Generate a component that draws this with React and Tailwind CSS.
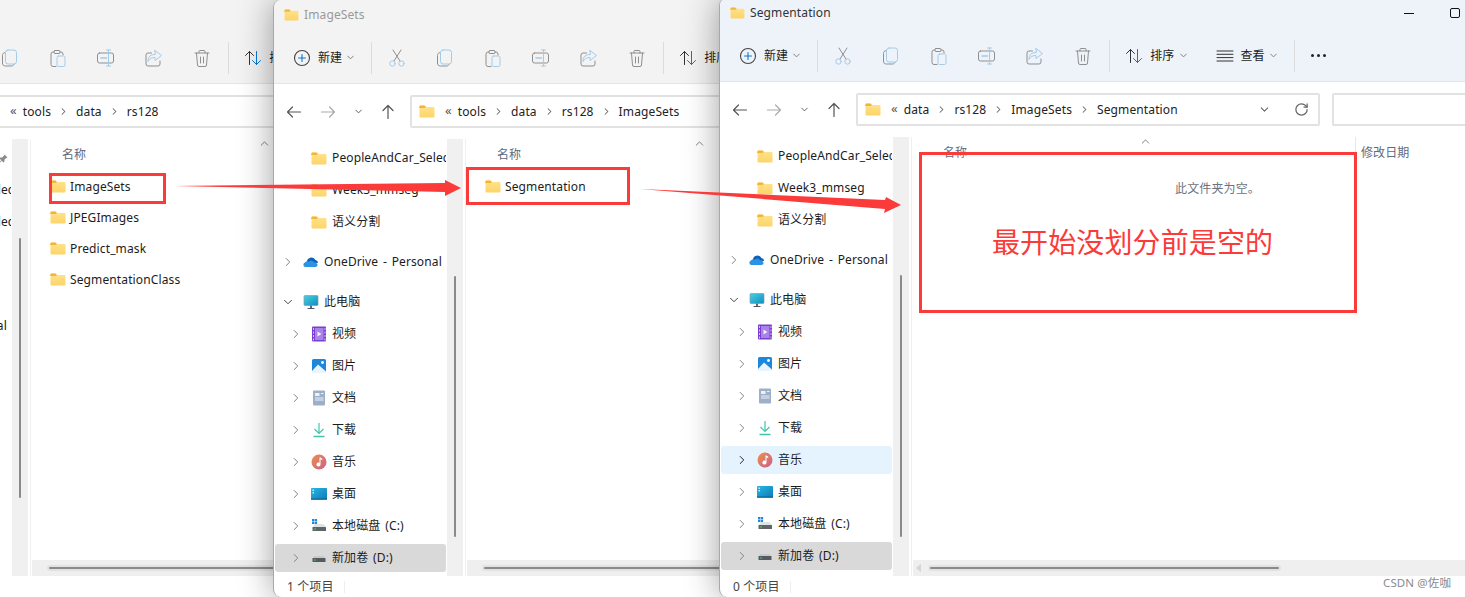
import { ChevronRight, ChevronDown, ChevronUp, RotateCw } from 'lucide-react';

const GRAY = '#8f8f8f';
const BLUE = '#a3cbea';

function Folder({ className = 'w-4 h-[13px]' }) {
  return (
    <svg viewBox="0 0 16 13" className={`${className} shrink-0`}>
      <defs>
        <linearGradient id="fold" x1="0" y1="0" x2="0" y2="1">
          <stop offset="0" stopColor="#ffe38f" />
          <stop offset="1" stopColor="#fdd467" />
        </linearGradient>
      </defs>
      <path d="M0.500 1.500a1 1 0 0 1 1-1h4l1.500 1.500h7.500a1 1 0 0 1 1 1v8.500a1 1 0 0 1-1 1h-13a1 1 0 0 1-1-1z" fill="url(#fold)" />
      <path d="M0.500 1.500a1 1 0 0 1 1-1h4l1.500 1.500-1.500 1h-5.500z" fill="#f3b536" />
    </svg>
  );
}

function Tool({ children }) {
  return <svg viewBox="0 0 20 20" fill="none" strokeWidth="1" strokeLinecap="round" strokeLinejoin="round" className="w-5 h-5 shrink-0">{children}</svg>;
}

const NewIcon = () => (
  <Tool>
    <circle cx="10" cy="10" r="7.500" stroke="#444" strokeWidth="1.100" />
    <path d="M10 6.500v7M6.500 10h7" stroke="#0a78d4" strokeWidth="1.100" />
  </Tool>
);
const CutIcon = () => (
  <Tool>
    <path d="M6 2l7 11M14 2L7 13" stroke={GRAY} />
    <circle cx="5.500" cy="15.500" r="2.700" stroke={BLUE} />
    <circle cx="14.500" cy="15.500" r="2.700" stroke={BLUE} />
  </Tool>
);
const CopyIcon = () => (
  <Tool>
    <path d="M5 4.500c-1.500.3-2.500 1.200-2.500 3v7.500c0 2 1 3 3 3h6c1.200 0 2-.5 2.500-1.500" stroke={GRAY} />
    <rect x="5.500" y="2" width="11" height="14" rx="2.500" stroke={BLUE} />
  </Tool>
);
const PasteIcon = () => (
  <Tool>
    <path d="M8 18.500H5a2 2 0 0 1-2-2V6a2 2 0 0 1 2-2h1M12 4h1a2 2 0 0 1 2 2v1" stroke={GRAY} />
    <rect x="6" y="2.500" width="6" height="3" rx="1" stroke={GRAY} />
    <rect x="9" y="8" width="8" height="10.500" rx="1.500" stroke={BLUE} />
  </Tool>
);
const RenameIcon = () => (
  <Tool>
    <rect x="1.500" y="5" width="16" height="10" rx="2" stroke={GRAY} />
    <path d="M5 10h5.500" stroke={BLUE} strokeWidth="1.600" />
    <path d="M12.500 2v16M10.500 2h4M10.500 18h4" stroke={BLUE} />
  </Tool>
);
const ShareIcon = () => (
  <Tool>
    <path d="M7.500 5H4a2 2 0 0 0-2 2v9a2 2 0 0 0 2 2h10a2 2 0 0 0 2-2v-3" stroke={GRAY} />
    <path d="M11 2.500l6.500 5-6.500 5v-3c-3.500 0-5.500 1-7 4 0-5 2.500-7 7-7z" stroke={BLUE} />
  </Tool>
);
const DeleteIcon = () => (
  <Tool>
    <path d="M3 5h14M7 5V3.500a1 1 0 0 1 1-1h4a1 1 0 0 1 1 1V5M4.500 5l1 12a1.500 1.500 0 0 0 1.500 1.500h6a1.500 1.500 0 0 0 1.500-1.500l1-12M8.500 9v6M11.500 9v6" stroke={GRAY} />
  </Tool>
);
const SortIcon = () => (
  <Tool>
    <path d="M6.500 16.500V3.500M2.500 7.500l4-4 4 4" stroke="#333" />
    <path d="M13.500 3.500v13M9.500 12.500l4 4 4-4" stroke="#0a78d4" />
  </Tool>
);
const ViewIcon = () => (
  <Tool>
    <path d="M2 5h16M2 8.300h16M2 11.600h16M2 15h16" stroke="#333" />
  </Tool>
);
const Arrow = ({ d, color }) => (
  <Tool>
    <path d={d} stroke={color} strokeWidth="1.200" />
  </Tool>
);

const OneDriveIcon = () => (
  <svg viewBox="0 0 16 12" className="w-4 h-3 shrink-0">
    <path d="M4 6.500a4.500 4.500 0 0 1 8.500-2.500 3 3 0 0 1 2.500 3z" fill="#0b63bd" />
    <path d="M2.500 11a2.300 2.300 0 0 1-.5-4.500 3 3 0 0 1 4-.8 3 3 0 0 1 3.500-.8 3 3 0 0 1 2 2 2.200 2.200 0 0 1 3 2.200c0 1-.8 1.900-1.800 1.900z" fill="#2a93e4" />
  </svg>
);
const PcIcon = () => (
  <svg viewBox="0 0 16 16" className="w-4 h-4 shrink-0">
    <defs>
      <linearGradient id="pc" x1="0" y1="0" x2="1" y2="1">
        <stop offset="0" stopColor="#4ad0e0" />
        <stop offset="1" stopColor="#0f8fc0" />
      </linearGradient>
    </defs>
    <rect x="1" y="1.500" width="14" height="10" rx="1" fill="url(#pc)" stroke="#8a9aa5" strokeWidth="0.700" />
    <rect x="7" y="11.500" width="2" height="2.500" fill="#667" />
    <rect x="4.500" y="14" width="7" height="1" fill="#556" />
  </svg>
);
const VideoIcon = () => (
  <svg viewBox="0 0 16 16" className="w-4 h-4 shrink-0">
    <rect x="1" y="0.500" width="14" height="15" rx="1" fill="#7a3fd0" />
    <rect x="4" y="2" width="8.500" height="12" fill="#a884e8" />
    <path d="M6.500 5.500l4 2.500-4 2.500z" fill="#f3ecff" />
    <path d="M2 2h1v2H2zM2 5.500h1v2H2zM2 9h1v2H2zM2 12.500h1v2H2zM13.500 2h1v2h-1zM13.500 5.500h1v2h-1zM13.500 9h1v2h-1zM13.500 12.500h1v2h-1z" fill="#d6c3f5" />
  </svg>
);
const PictureIcon = () => (
  <svg viewBox="0 0 16 16" className="w-4 h-4 shrink-0">
    <rect x="1" y="1" width="14" height="14" rx="1.500" fill="#1d87dc" />
    <circle cx="11.500" cy="4.500" r="1.400" fill="#fff" />
    <path d="M1 13l6-6.500 8 7V15H1z" fill="#eaf4fc" />
  </svg>
);
const DocIcon = () => (
  <svg viewBox="0 0 16 16" className="w-4 h-4 shrink-0">
    <rect x="2" y="0.500" width="12" height="15" rx="1" fill="#9db0c8" />
    <path d="M4 3h4.500v3H4zM4 7.500h8.500v1H4zM4 9.500h8.500v1H4zM10 3h2.500v1H10z" fill="#eef2f7" />
  </svg>
);
const DownloadIcon = () => (
  <svg viewBox="0 0 16 16" fill="none" className="w-4 h-4 shrink-0">
    <path d="M8 1v10M3.500 7L8 11.500 12.500 7" stroke="#3fc6a8" strokeWidth="1.200" />
    <path d="M2.500 14.500h11" stroke="#3fc6a8" strokeWidth="1.400" />
  </svg>
);
const MusicIcon = () => (
  <svg viewBox="0 0 16 16" className="w-4 h-4 shrink-0">
    <defs>
      <linearGradient id="mus" x1="0" y1="0" x2="1" y2="1">
        <stop offset="0" stopColor="#ee8f4a" />
        <stop offset="1" stopColor="#c9608f" />
      </linearGradient>
    </defs>
    <circle cx="8" cy="8" r="7.500" fill="url(#mus)" />
    <path d="M8.500 3.500h1l2 1.500-.5 1-1.500-.8V10.500a2 2 0 1 1-1-1.700z" fill="#fff" />
  </svg>
);
const DesktopIcon = () => (
  <svg viewBox="0 0 16 16" className="w-4 h-4 shrink-0">
    <defs>
      <linearGradient id="dsk" x1="0" y1="0" x2="1" y2="1">
        <stop offset="0" stopColor="#2cb6e2" />
        <stop offset="1" stopColor="#0b7cb8" />
      </linearGradient>
    </defs>
    <rect x="0" y="2" width="16" height="11.500" rx="0.800" fill="url(#dsk)" />
    <rect x="0" y="12.500" width="16" height="1.200" fill="#0a5f92" />
    <path d="M1.500 3.500h1.500v1.500H1.500zM1.500 6h1.500v1.500H1.500z" fill="#bfe8f7" />
  </svg>
);
const DriveCIcon = () => (
  <svg viewBox="0 0 16 16" className="w-4 h-4 shrink-0">
    <path d="M2 9l1.500-3h9L15 9z" fill="#dfe3e6" />
    <rect x="1.500" y="9" width="13.500" height="4" rx="0.600" fill="#5f6468" />
    <rect x="3" y="10.500" width="2" height="1" fill="#2fd17a" />
    <path d="M1 1h2.300v2.300H1zM3.800 1h2.300v2.300H3.800zM1 3.800h2.300v2.300H1zM3.800 3.800h2.300v2.300H3.800z" fill="#1f88d8" />
  </svg>
);
const DriveDIcon = () => (
  <svg viewBox="0 0 16 16" className="w-4 h-4 shrink-0">
    <path d="M2 8l1.500-2h9L14 8z" fill="#c6cacd" />
    <rect x="1.500" y="8" width="13" height="4" rx="0.600" fill="#565a5e" />
    <rect x="3" y="9.500" width="2" height="1" fill="#36c97c" />
  </svg>
);
const PinIcon = () => (
  <svg viewBox="0 0 10 10" className="w-[9px] h-[9px] shrink-0 ml-auto mr-[3px]">
    <path d="M6 0.500l3.500 3.500-1.500.5-2 2 0 2-1 1L3 7.500 1 9.500.5 9 2.500 7 .5 5l1-1h2l2-2z" fill="#8a8a8a" />
  </svg>
);

const baseNav = [
  { label: 'PeopleAndCar_Selec', icon: Folder, level: 1, none: true },
  { label: 'Week3_mmseg', icon: Folder, level: 1, none: true },
  { label: '语义分割', icon: Folder, level: 1, none: true },
  { label: 'OneDrive - Personal', icon: OneDriveIcon, level: 0, gap: true },
  { label: '此电脑', icon: PcIcon, level: 0, gap: true, open: true },
  { label: '视频', icon: VideoIcon, level: 1 },
  { label: '图片', icon: PictureIcon, level: 1 },
  { label: '文档', icon: DocIcon, level: 1 },
  { label: '下载', icon: DownloadIcon, level: 1 },
  { label: '音乐', icon: MusicIcon, level: 1 },
  { label: '桌面', icon: DesktopIcon, level: 1 },
  { label: '本地磁盘 (C:)', icon: DriveCIcon, level: 1 },
  { label: '新加卷 (D:)', icon: DriveDIcon, level: 1, selected: true },
];

const quickNav = [
  { label: '图片', icon: PictureIcon, level: 1, none: true, pin: true },
  { label: 'PeopleAndCar_Selec', icon: Folder, level: 1, none: true },
  { label: 'PeopleAndCar_Selec', icon: Folder, level: 1, none: true },
  { label: 'Week3', icon: Folder, level: 1, none: true },
  { label: '语义分割', icon: Folder, level: 1, none: true },
  { label: 'OneDrive - Personal', icon: OneDriveIcon, level: 0, gap: true },
  { label: '此电脑', icon: PcIcon, level: 0, gap: true, open: true },
  { label: '视频', icon: VideoIcon, level: 1 },
  { label: '图片', icon: PictureIcon, level: 1 },
  { label: '文档', icon: DocIcon, level: 1 },
  { label: '下载', icon: DownloadIcon, level: 1 },
];

function NavRow({ item, hovered }) {
  const Icon = item.icon;
  const bg = item.selected ? 'bg-[#d9d9d9]' : hovered ? 'bg-[#e5f3ff]' : '';
  const Chev = item.open ? ChevronDown : ChevronRight;
  return (
    <div className={`flex items-center h-7 ml-px mr-px rounded-[3px] shrink-0 whitespace-nowrap overflow-hidden [word-spacing:1.500px] ${item.level ? 'pl-[13px]' : 'pl-[5px]'} ${item.gap ? 'mt-2' : ''} ${bg}`}>
      <span className="w-4 flex justify-center shrink-0">
        {!item.none && (
          <Chev size={14} strokeWidth={1.700} color={hovered ? '#222' : item.open ? '#444' : '#808080'} />
        )}
      </span>
      <span className="ml-[7px] flex justify-center shrink-0"><Icon /></span>
      <span className="ml-[5px] text-[#1c1c1c]">{item.label}</span>
      {item.pin && <PinIcon />}
    </div>
  );
}

function Window({ left, top, height, width, bar, title, titleColor, crumbs, nav, navHover, thumbTop, thumbH, files, empty, status, scrollW, arrow, controls, wide, shadow }) {
  return (
    <section
      className={`absolute overflow-hidden rounded-l-lg bg-white flex flex-col border-l border-[#a8a8a8] ${shadow ? 'shadow-[0_0_34px_rgba(0,0,0,0.38)]' : ''}`}
      style={{ left, top, height, width }}
    >
      <div className={bar}>
        <div className="h-[30px] flex items-center pl-[10px]">
          <Folder className="w-[15px] h-[12px]" />
          <span className={`ml-[5px] ${titleColor}`}>{title}</span>
          {controls && (
            <div className="ml-auto flex">
              <span className="w-[46px] flex justify-center items-center"><span className="w-[10px] h-px bg-[#111]" /></span>
              <span className="w-[46px] flex justify-center items-center"><span className="w-[10px] h-[10px] border border-[#111] rounded-[2px]" /></span>
              <span className="w-[46px]" />
            </div>
          )}
        </div>
        <div className="h-[54px] w-max min-w-full whitespace-nowrap border-b border-[#e4e4e4] flex items-center pl-[18px] pt-[2px] text-[#1c1c1c]">
          <NewIcon />
          <span className="ml-[6px]">新建</span>
          <ChevronDown size={11} color="#777" className="ml-[3px]" />
          <span className="ml-[15px] w-px h-8 bg-[#dcdcdc]" />
          <div className="flex ml-[1px]">
            {[CutIcon, CopyIcon, PasteIcon, RenameIcon, ShareIcon, DeleteIcon].map((I, i) => (
              <span key={i} className="w-12 flex justify-center"><I /></span>
            ))}
          </div>
          <span className="ml-[2px] w-px h-8 bg-[#dcdcdc]" />
          <span className="ml-[14px]"><SortIcon /></span>
          <span className="ml-[6px]">排序</span>
          <ChevronDown size={11} color="#777" className="ml-[3px]" />
          <span className="ml-[26px]"><ViewIcon /></span>
          <span className="ml-[6px]">查看</span>
          <ChevronDown size={11} color="#777" className="ml-[3px]" />
          <span className="ml-[15px] w-px h-8 bg-[#dcdcdc]" />
          <span className="ml-[16px] flex gap-[3px]">
            <i className="w-[3px] h-[3px] rounded-full bg-[#222]" />
            <i className="w-[3px] h-[3px] rounded-full bg-[#222]" />
            <i className="w-[3px] h-[3px] rounded-full bg-[#222]" />
          </span>
        </div>
      </div>

      <div className="h-[55px] flex items-start pt-[11px] pl-[10px] shrink-0">
        <div className="h-[33px] flex items-center">
          <Arrow d="M16.500 10h-13M8.500 5l-5 5 5 5" color="#555" />
          <span className="ml-[14px]"><Arrow d="M3.500 10h13M11.500 5l5 5-5 5" color="#aaa" /></span>
          <ChevronDown size={11} color="#555" strokeWidth={2} className="ml-[15px]" />
          <span className="ml-[14px]"><Arrow d="M10 16.500v-13M5 8.500l5-5 5 5" color="#555" /></span>
        </div>
        <div className="ml-[12px] w-[464px] h-[33px] shrink-0 border-2 border-[#e2e2e2] rounded-[2px] flex items-center pl-[7px] pr-[9px] text-[#222] whitespace-nowrap">
          <Folder />
          <span className="ml-[10px] text-[13px] leading-none text-[#555] -mt-[3px]">«</span>
          <span className="ml-[6px] flex items-center">
            {crumbs.map((c, i) => (
              <span key={c} className="flex items-center">
                {i > 0 && <ChevronRight size={11} strokeWidth={2.200} color="#666" className="mx-[7px]" />}
                {c}
              </span>
            ))}
          </span>
          <ChevronDown size={13} color="#666" className="ml-auto" />
          <RotateCw size={15} color="#666" className="ml-[23px]" />
        </div>
        <div className="ml-[12px] w-[300px] h-[33px] shrink-0 border-2 border-[#e2e2e2] rounded-[2px]" />
      </div>

      <div className="flex-1 flex min-h-0">
        <div className="w-[173px] shrink-0 flex flex-col gap-1 pt-[5px] overflow-hidden">
          {nav.map((item, i) => (
            <NavRow key={i} item={item} hovered={navHover === item.label} />
          ))}
        </div>
        <div className="w-4 shrink-0 bg-[#f0f0f0] relative">
          <span className="absolute left-[7px] w-[2px] bg-[#8a8a8a] rounded-sm" style={{ top: thumbTop, height: thumbH }} />
        </div>
        <div className="ml-[2px] w-px shrink-0 bg-[#f0f0f0]" />
        <div className="ml-px flex-1 min-w-0 flex flex-col">
          <div className="h-[32px] shrink-0 flex pl-[26px] text-[#5d6b80] whitespace-nowrap">
            <div className="w-[416px] shrink-0 relative pl-[4px] pt-[7px]">
              名称
              <ChevronUp size={13} color="#666" strokeWidth={1.500} className="absolute top-[-2px] left-[200px]" />
            </div>
            {wide && <div className="border-l border-[#e8e8e8] pl-[5px] pt-[7px]">修改日期</div>}
          </div>
          <div className="flex-1 min-h-0">
            {files.map((f) => (
              <div key={f} className="h-[31px] flex items-center pl-[18px] text-[#1c1c1c] whitespace-nowrap">
                <Folder />
                <span className="ml-[4px]">{f}</span>
              </div>
            ))}
            {empty && <p className="text-center text-[#6b7280] pt-[11px] pr-[2px]">{empty}</p>}
          </div>
          <div className="h-4 shrink-0 bg-[#efefef] flex items-center relative">
            {arrow && <span className="absolute left-[3px] w-0 h-0 border-y-[4px] border-y-transparent border-r-[5px] border-r-[#d4d4d4]" />}
            <span className="ml-[17px] h-[2px] bg-[#8a8a8a] rounded-sm shadow-[0_0_0_2px_#e2e2e2]" style={{ width: scrollW }} />
          </div>
        </div>
      </div>

      <div className="h-[21px] shrink-0 flex items-center pl-[13px] text-[#444] whitespace-nowrap">
        <span className="w-[57px]">{status}</span>
        <span className="w-px h-3 bg-[#eee]" />
      </div>
    </section>
  );
}

function RedBox({ className }) {
  return <div className={`absolute border-[3px] border-[#fb3a3a] ${className}`} />;
}

export default function App() {
  return (
    <div className="relative w-[1465px] h-[597px] overflow-hidden bg-white text-[12px] tracking-[0.12px] [font-family:'Noto_Sans','Noto_Sans_CJK_SC',sans-serif]">
      <Window
        left={-162} top={0} height={597} width={460}
        bar="bg-[#f3f3f3] shrink-0" title="rs128" titleColor="text-[#999]"
        crumbs={['tools', 'data', 'rs128']}
        nav={quickNav} thumbTop={99} thumbH={260}
        files={['ImageSets', 'JPEGImages', 'Predict_mask', 'SegmentationClass']}
        status="4 个项目" scrollW={400}
      />
      <Window
        left={273} top={0} height={597} width={470} shadow
        bar="bg-[#f3f3f3] shrink-0" title="ImageSets" titleColor="text-[#999]"
        crumbs={['tools', 'data', 'rs128', 'ImageSets']}
        nav={baseNav} thumbTop={137} thumbH={261}
        files={['Segmentation']}
        status="1 个项目" scrollW={400}
      />
      <Window
        left={719} top={-2} height={599} width={805} shadow controls wide
        bar="bg-[#eef3fa] shrink-0" title="Segmentation" titleColor="text-[#333]"
        crumbs={['data', 'rs128', 'ImageSets', 'Segmentation']}
        nav={baseNav} navHover="音乐" thumbTop={138} thumbH={262}
        files={[]} empty="此文件夹为空。" arrow
        status="0 个项目" scrollW={349}
      />

      <RedBox className="left-[49px] top-[173px] w-[117px] h-[31px]" />
      <RedBox className="left-[466px] top-[167px] w-[164px] h-[38px]" />
      <RedBox className="left-[919px] top-[152px] w-[438px] h-[161px]" />
      <svg className="absolute inset-0 w-full h-full pointer-events-none" viewBox="0 0 1465 597">
        <polygon points="174,186 445,183 445,180 461,188 445,196 445,192" fill="#fb3a3a" />
        <polygon points="640,189 885,200 886,197 901,205 884,213 885,209" fill="#fb3a3a" />
      </svg>
      <div className="absolute left-[992px] top-[222px] text-[28px] leading-10 text-[#fb3a3a] whitespace-nowrap">最开始没划分前是空的</div>
      <div className="absolute left-[1383px] top-[574px] text-[11.500px] text-[#8a8a8a] whitespace-nowrap">CSDN @佐咖</div>
    </div>
  );
}
